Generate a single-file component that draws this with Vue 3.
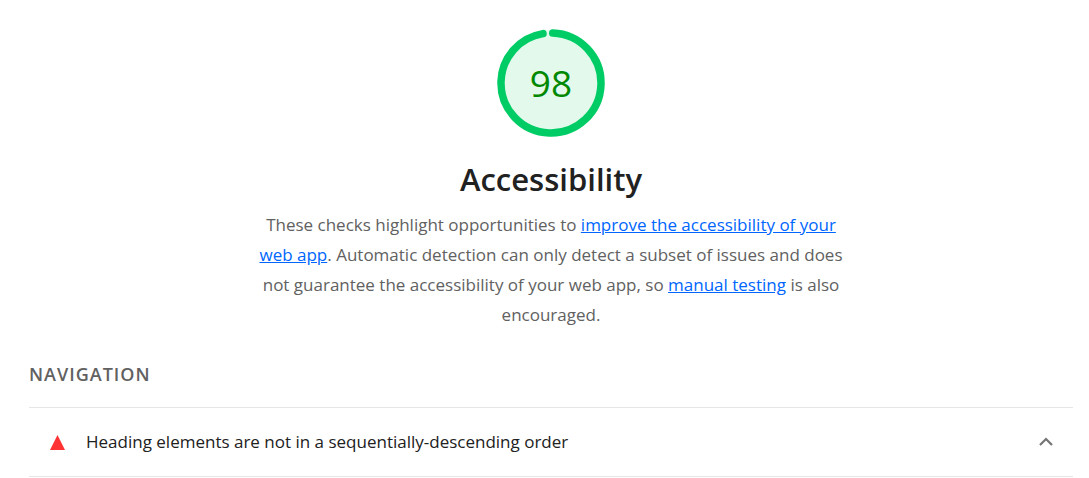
<script setup>
import { ref } from 'vue'

const score = 98
const radius = 50
const circumference = 2 * Math.PI * radius
const arc = (score / 100) * circumference - 4
const expanded = ref(true)
</script>

<template>
  <main class="category">
    <header class="summary">
      <div class="gauge">
        <svg class="gauge-ring" viewBox="0 0 108 108" aria-hidden="true">
          <circle class="gauge-base" cx="54" cy="54" r="53" />
          <circle
            class="gauge-arc"
            cx="54"
            cy="54"
            :r="radius"
            :stroke-dasharray="`${arc} ${circumference}`"
            transform="rotate(-88 54 54)"
          />
        </svg>
        <span class="gauge-score">{{ score }}</span>
      </div>
      <h1 class="title">Accessibility</h1>
      <p class="description">
        These checks highlight opportunities to
        <a href="#improve">improve the accessibility of your web app</a>. Automatic detection can
        only detect a subset of issues and does not guarantee the accessibility of your web app, so
        <a href="#manual">manual testing</a> is also encouraged.
      </p>
    </header>

    <section class="group">
      <h2 class="group-title">Navigation</h2>
      <button class="audit" type="button" :aria-expanded="expanded" @click="expanded = !expanded">
        <svg class="audit-icon" viewBox="0 0 15 15" aria-hidden="true">
          <path d="M7.5 0 L15 15 H0 Z" />
        </svg>
        <span class="audit-title">Heading elements are not in a sequentially-descending order</span>
        <svg class="chevron" :class="{ closed: !expanded }" viewBox="0 0 14 10" aria-hidden="true">
          <path d="M1 8 L7 2 L13 8" />
        </svg>
      </button>
    </section>
  </main>
</template>

<style>
body {
  margin: 0;
  background: #fff;
}
</style>

<style scoped>
.category {
  padding: 29px 16px 0 29px;
  font-family: "Segoe UI", "Open Sans", "Noto Sans", sans-serif;
  font-size: 17px;
  color: #212121;
}

.summary {
  display: flex;
  flex-direction: column;
  align-items: center;
}

.gauge {
  display: grid;
  place-items: center;
  width: 108px;
  height: 108px;
}

.gauge-ring,
.gauge-score {
  grid-area: 1 / 1;
}

.gauge-ring {
  width: 100%;
  height: 100%;
}

.gauge-base {
  fill: #e3f9ec;
}

.gauge-arc {
  fill: none;
  stroke: #00cc66;
  stroke-width: 7.5;
  stroke-linecap: round;
}

.gauge-score {
  font-size: 37px;
  line-height: 40px;
  color: #008800;
}

.title {
  margin: 20px 0 9px;
  font-size: 31px;
  font-weight: 600;
  line-height: 44px;
}

.description {
  max-width: 600px;
  margin: 0;
  line-height: 30px;
  text-align: center;
  color: #616161;
}

.description a {
  color: #0066ff;
  text-decoration: underline;
}

.group-title {
  margin: 29px 0 18px;
  font-size: 18px;
  font-weight: 600;
  line-height: 30px;
  letter-spacing: 1px;
  text-transform: uppercase;
  color: #616161;
}

.audit {
  display: flex;
  align-items: center;
  width: 100%;
  padding: 19px 20px 19px 21px;
  border: 0;
  border-top: 1px solid #e6e6e6;
  border-bottom: 1px solid #e6e6e6;
  background: none;
  font: inherit;
  line-height: 30px;
  text-align: left;
  color: inherit;
  cursor: pointer;
}

.audit-icon {
  width: 15px;
  height: 15px;
  margin-right: 21px;
  fill: #ff3333;
}

.audit-title {
  flex: 1;
}

.chevron {
  width: 14px;
  height: 10px;
  fill: none;
  stroke: #757575;
  stroke-width: 2.2;
}

.chevron.closed {
  transform: rotate(180deg);
}
</style>
